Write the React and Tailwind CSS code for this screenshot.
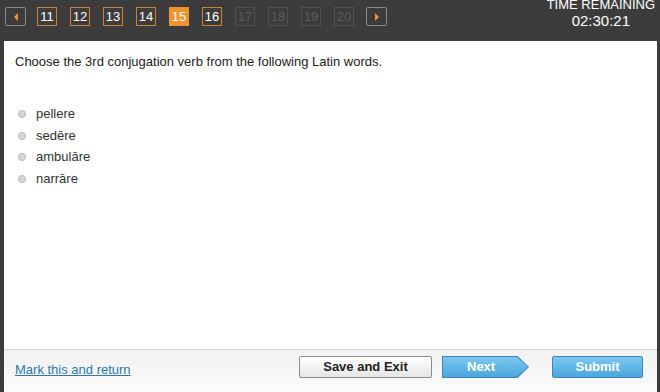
import React from "react";

const pages = [
  { n: 11, state: "done" },
  { n: 12, state: "done" },
  { n: 13, state: "done" },
  { n: 14, state: "done" },
  { n: 15, state: "current" },
  { n: 16, state: "done" },
  { n: 17, state: "off" },
  { n: 18, state: "off" },
  { n: 19, state: "off" },
  { n: 20, state: "off" },
];

const options = ["pellere", "sedēre", "ambulāre", "narrāre"];

const PageBox = ({ n, state }) => {
  if (state === "current") {
    return (
      <div className="w-[20px] h-[19px] flex items-center justify-center bg-[#f0922e] border border-[#f0922e] text-white text-[13px]">
        {n}
      </div>
    );
  }
  if (state === "off") {
    return (
      <div className="w-[20px] h-[19px] flex items-center justify-center border border-[#4f4f4f] text-[#5c5c5c] text-[13px]">
        {n}
      </div>
    );
  }
  return (
    <div className="w-[20px] h-[19px] flex items-center justify-center border border-[#c98236] text-white text-[13px]">
      {n}
    </div>
  );
};

const ArrowBtn = ({ dir }) => (
  <div className="w-[21px] h-[19px] flex items-center justify-center border border-[#8a8a8a] rounded-[2px]">
    {dir === "left" ? (
      <div className="w-0 h-0 border-y-[4px] border-y-transparent border-r-[4px] border-r-[#f0922e]" />
    ) : (
      <div className="w-0 h-0 border-y-[4px] border-y-transparent border-l-[4px] border-l-[#f0922e]" />
    )}
  </div>
);

export default function App() {
  return (
    <div
      className="w-[660px] h-[392px] flex flex-col bg-[#3c3c3c] overflow-hidden"
      style={{ fontFamily: '"Liberation Sans", Arial, sans-serif' }}
    >
      {/* top bar */}
      <div className="h-[41px] flex items-start pl-[5px] pr-[5px]">
        <div className="flex items-center mt-[7px]">
          <ArrowBtn dir="left" />
          <div className="flex items-center gap-[13px] ml-[11px]">
            {pages.map((p) => (
              <PageBox key={p.n} n={p.n} state={p.state} />
            ))}
          </div>
          <div className="ml-[12px]">
            <ArrowBtn dir="right" />
          </div>
        </div>
        <div className="ml-auto flex flex-col items-center text-white -mt-[3px]">
          <span className="text-[13px] leading-[15px]">TIME REMAINING</span>
          <span className="text-[15px] leading-[17px]">02:30:21</span>
        </div>
      </div>

      {/* content */}
      <div className="flex-1 ml-[4px] mr-[3px] bg-white flex flex-col">
        <div className="flex-1 pl-[11px] pt-[11px]">
          <p className="text-[13px] text-[#222]">
            Choose the 3rd conjugation verb from the following Latin words.
          </p>
          <div className="mt-[34px] flex flex-col gap-[4.6px]">
            {options.map((o) => (
              <label key={o} className="flex items-center h-[17px]">
                <span className="ml-[3px] w-[8px] h-[8px] rounded-full bg-[#d6d6d6] border border-[#b8b8b8]" />
                <span className="ml-[10px] text-[13px] text-[#333]">{o}</span>
              </label>
            ))}
          </div>
        </div>

        {/* footer */}
        <div className="h-[43px] border-t border-[#d4d4d4] bg-gradient-to-b from-[#f2f2f2] to-[#fbfbfb] flex items-start pt-[6px] pl-[11px] pr-[14px]">
          <a className="text-[13px] text-[#2a78ae] underline mt-[4px]">Mark this and return</a>
          <div className="ml-auto flex items-center">
            <button className="w-[133px] h-[22px] border border-[#8c8c8c] rounded-[2px] bg-gradient-to-b from-white to-[#e6e6e6] text-[13px] font-bold text-[#222]">
              Save and Exit
            </button>
            <div className="ml-[10px] w-[87px] h-[22px] bg-[#3a86b8] [clip-path:polygon(0_0,87%_0,100%_50%,87%_100%,0_100%)] p-[1px]">
              <div className="w-full h-full bg-gradient-to-b from-[#7cc7f2] to-[#4aa6dc] [clip-path:polygon(0_0,87%_0,100%_50%,87%_100%,0_100%)] flex items-center pl-[24px] text-[13px] font-bold text-white">
                Next
              </div>
            </div>
            <button className="ml-[23px] w-[91px] h-[22px] border border-[#3a86b8] rounded-[2px] bg-gradient-to-b from-[#7cc7f2] to-[#4aa6dc] text-[13px] font-bold text-white">
              Submit
            </button>
          </div>
        </div>
      </div>
    </div>
  );
}
